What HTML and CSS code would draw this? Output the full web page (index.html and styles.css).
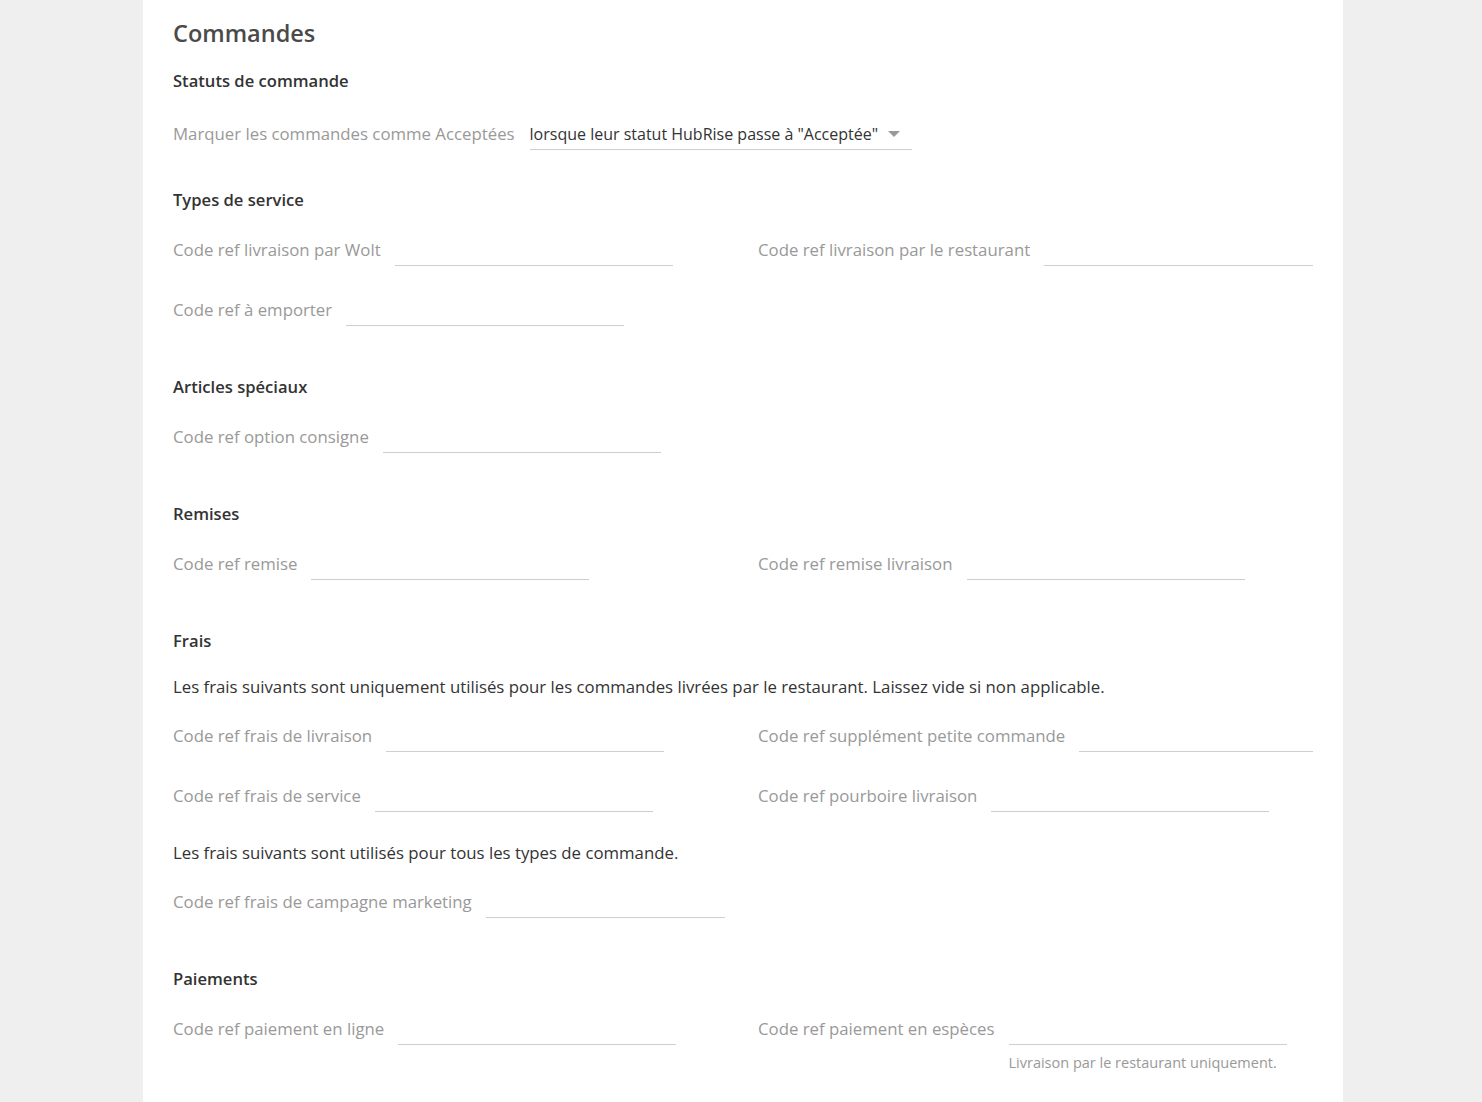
FILE: index.html
```html
<!DOCTYPE html>
<html lang="fr">
<head>
<meta charset="utf-8">
<title>Commandes</title>
<link rel="stylesheet" href="styles.css">
</head>
<body>
<div class="card">
  <h1 class="title">Commandes</h1>

  <section class="section section--status">
    <h2 class="section-title">Statuts de commande</h2>
    <div class="field">
      <label class="label">Marquer les commandes comme Acceptées</label>
      <div class="select">
        <span class="select-value">lorsque leur statut HubRise passe à "Acceptée"</span>
        <span class="select-arrow"></span>
      </div>
    </div>
  </section>

  <section class="section">
    <h2 class="section-title">Types de service</h2>
    <div class="grid">
      <div class="field"><label class="label">Code ref livraison par Wolt</label><span class="input"></span></div>
      <div class="field"><label class="label">Code ref livraison par le restaurant</label><span class="input"></span></div>
      <div class="field"><label class="label">Code ref à emporter</label><span class="input"></span></div>
    </div>
  </section>

  <section class="section">
    <h2 class="section-title">Articles spéciaux</h2>
    <div class="grid">
      <div class="field"><label class="label">Code ref option consigne</label><span class="input"></span></div>
    </div>
  </section>

  <section class="section">
    <h2 class="section-title">Remises</h2>
    <div class="grid">
      <div class="field"><label class="label">Code ref remise</label><span class="input"></span></div>
      <div class="field"><label class="label">Code ref remise livraison</label><span class="input"></span></div>
    </div>
  </section>

  <section class="section">
    <h2 class="section-title">Frais</h2>
    <p class="note">Les frais suivants sont uniquement utilisés pour les commandes livrées par le restaurant. Laissez vide si non applicable.</p>
    <div class="grid">
      <div class="field"><label class="label">Code ref frais de livraison</label><span class="input"></span></div>
      <div class="field"><label class="label">Code ref supplément petite commande</label><span class="input"></span></div>
      <div class="field"><label class="label">Code ref frais de service</label><span class="input"></span></div>
      <div class="field"><label class="label">Code ref pourboire livraison</label><span class="input"></span></div>
    </div>
    <p class="note note--second">Les frais suivants sont utilisés pour tous les types de commande.</p>
    <div class="grid">
      <div class="field"><label class="label">Code ref frais de campagne marketing</label><span class="input input--short"></span></div>
    </div>
  </section>

  <section class="section section--last">
    <h2 class="section-title">Paiements</h2>
    <div class="grid">
      <div class="field"><label class="label">Code ref paiement en ligne</label><span class="input"></span></div>
      <div class="field">
        <label class="label">Code ref paiement en espèces</label>
        <div class="input-wrap">
          <span class="input"></span>
          <span class="help">Livraison par le restaurant uniquement.</span>
        </div>
      </div>
    </div>
  </section>
</div>
</body>
</html>
```

FILE: styles.css
```css
html, body {
  margin: 0;
  padding: 0;
}
body {
  background: #efefef;
  font-family: "Open Sans", "Noto Sans", "DejaVu Sans", sans-serif;
  color: #333;
  min-height: 1102px;
}
.card {
  width: 1140px;
  margin-left: 143px;
  background: #fff;
  padding: 16px 30px 30px;
  min-height: 1056px;
}
.title {
  margin: 0 0 18px;
  font-size: 23.5px;
  line-height: 35px;
  font-weight: 600;
  color: #4a4a4a;
}
.section {
  margin-bottom: 49px;
}
.section--status {
  margin-bottom: 38px;
}
.section--status .section-title {
  margin-bottom: 25px;
}
.section--last {
  margin-bottom: 0;
}
.section-title {
  margin: 0 0 22px;
  font-size: 16.6px;
  line-height: 24px;
  font-weight: 600;
  color: #333;
}
.note {
  margin: 0 0 21px;
  font-size: 16.8px;
  line-height: 24px;
  color: #333;
}
.note--second {
  margin-top: 29px;
}
.grid {
  display: grid;
  grid-template-columns: 555px 555px;
  column-gap: 30px;
  row-gap: 28px;
}
.field {
  display: flex;
  align-items: flex-start;
  min-width: 0;
}
.label {
  flex: none;
  font-size: 16.8px;
  line-height: 32px;
  color: #999;
  margin-right: 14px;
  white-space: nowrap;
}
.input {
  display: block;
  width: 278px;
  min-width: 0;
  flex-shrink: 1;
  height: 31px;
  border-bottom: 1px solid #cfcfcf;
}
.input--short {
  width: 239px;
}
.input-wrap {
  display: flex;
  flex-direction: column;
  width: 278px;
}
.input-wrap .input {
  width: 100%;
}
.help {
  margin-top: 8px;
  font-size: 14.5px;
  line-height: 20px;
  color: #999;
}
.select {
  display: flex;
  align-items: center;
  width: 382px;
  height: 31px;
  border-bottom: 1px solid #cfcfcf;
  margin-left: 1px;
}
.select-value {
  flex: 1;
  font-size: 16px;
  line-height: 32px;
  color: #333;
  white-space: nowrap;
}
.select-arrow {
  width: 0;
  height: 0;
  border-left: 6px solid transparent;
  border-right: 6px solid transparent;
  border-top: 6px solid #999;
  margin-right: 12px;
}
```
